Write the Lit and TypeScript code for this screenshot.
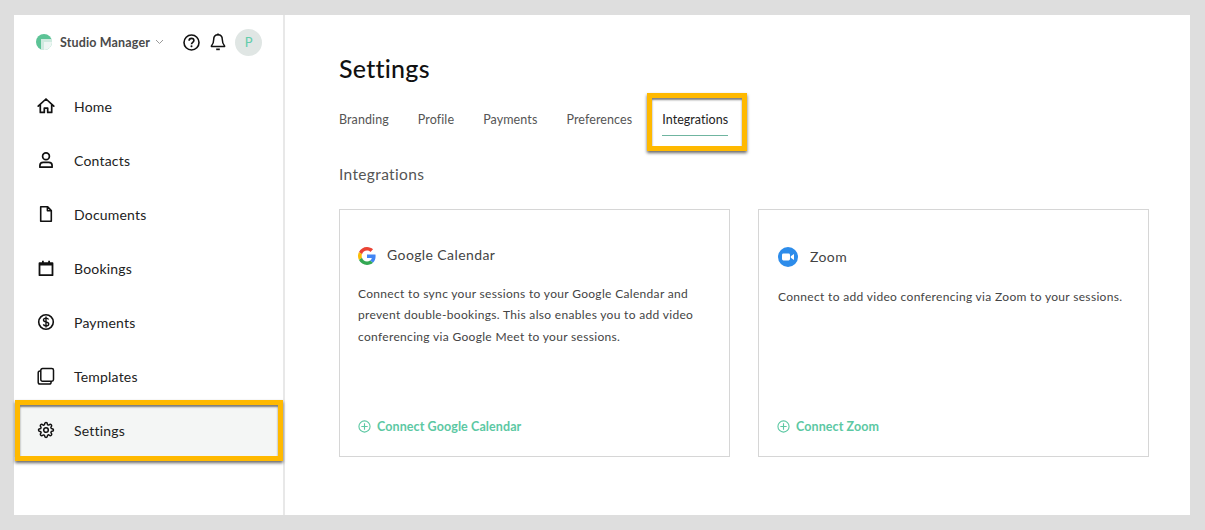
import { LitElement, html, css, svg } from "lit";
import { customElement } from "lit/decorators.js";

const icons: Record<string, unknown> = {
  home: svg`<path d="M2.2 10.2 10 3l7.8 7.2M4.3 8.6V16.4h4v-4.2h3.4v4.2h4V8.6" fill="none" stroke="#111" stroke-width="1.7" stroke-linejoin="round" stroke-linecap="round"/>`,
  person: svg`<circle cx="10" cy="6.3" r="3.4" fill="none" stroke="#111" stroke-width="1.7"/><path d="M3.9 17.2v-1.7c0-2 1.5-3.2 3.4-3.2h5.4c1.900 0 3.400 1.200 3.400 3.200v1.700z" fill="none" stroke="#111" stroke-width="1.700" stroke-linejoin="round"/>`,
  doc: svg`<path d="M4.700 2.800h7l3.600 3.800v10.600H4.700zM11.400 2.800v4h3.900" fill="none" stroke="#111" stroke-width="1.600" stroke-linejoin="round"/>`,
  cal: svg`<path d="M3.500 5.200h13v12h-13z" fill="none" stroke="#111" stroke-width="1.800" stroke-linejoin="round"/><path d="M3.500 5.200h13v2.200h-13zM6 2.800h1.800v3H6zM12.200 2.800H14v3h-1.800z" fill="#111"/>`,
  pay: svg`<circle cx="10" cy="10" r="7.300" fill="none" stroke="#111" stroke-width="1.600"/><path d="M12.600 7.500c-.5-1-1.500-1.400-2.600-1.400-1.400 0-2.500.7-2.500 1.900 0 2.800 5.200 1.200 5.200 4 0 1.200-1.200 1.900-2.700 1.900-1.200 0-2.200-.5-2.700-1.500M10 4.600v10.800" fill="none" stroke="#111" stroke-width="1.400"/>`,
  copy: svg`<path d="M6.500 2.600h9.300a1.700 1.700 0 0 1 1.700 1.700v9.300a1.700 1.700 0 0 1-1.700 1.700H6.500a1.700 1.700 0 0 1-1.700-1.700V4.300a1.700 1.700 0 0 1 1.700-1.700z" fill="none" stroke="#111" stroke-width="1.500"/><path d="M4.800 5H4a1.800 1.800 0 0 0-1.800 1.800v9.400A1.800 1.800 0 0 0 4 18h9.300a1.800 1.800 0 0 0 1.800-1.800v-.9" fill="none" stroke="#111" stroke-width="1.500"/>`,
  gear: svg`<g transform="translate(1.840 1.840) scale(.68)" fill="none" stroke="#111" stroke-width="2.200" stroke-linejoin="round"><circle cx="12" cy="12" r="3.400"/><path d="M19.400 15a1.650 1.650 0 0 0 .33 1.820l.06.06a2 2 0 0 1 0 2.830 2 2 0 0 1-2.830 0l-.06-.06a1.650 1.650 0 0 0-1.820-.33 1.650 1.650 0 0 0-1 1.510V21a2 2 0 0 1-2 2 2 2 0 0 1-2-2v-.09A1.650 1.650 0 0 0 9 19.400a1.650 1.650 0 0 0-1.820.33l-.06.06a2 2 0 0 1-2.830 0 2 2 0 0 1 0-2.830l.06-.06a1.650 1.650 0 0 0 .33-1.820 1.650 1.650 0 0 0-1.510-1H3a2 2 0 0 1-2-2 2 2 0 0 1 2-2h.09A1.650 1.650 0 0 0 4.600 9a1.650 1.650 0 0 0-.33-1.820l-.06-.06a2 2 0 0 1 0-2.830 2 2 0 0 1 2.830 0l.06.06a1.650 1.650 0 0 0 1.820.33H9a1.650 1.650 0 0 0 1-1.510V3a2 2 0 0 1 2-2 2 2 0 0 1 2 2v.09a1.650 1.650 0 0 0 1 1.510 1.650 1.650 0 0 0 1.820-.33l.06-.06a2 2 0 0 1 2.830 0 2 2 0 0 1 0 2.830l-.06.06a1.650 1.650 0 0 0-.33 1.820V9a1.650 1.650 0 0 0 1.510 1H21a2 2 0 0 1 2 2 2 2 0 0 1-2 2h-.09a1.650 1.650 0 0 0-1.510 1z"/></g>`,
};

const nav = [
  ["home", "Home"],
  ["person", "Contacts"],
  ["doc", "Documents"],
  ["cal", "Bookings"],
  ["pay", "Payments"],
  ["copy", "Templates"],
  ["gear", "Settings"],
];

const plus = html`<svg class="plus" viewBox="0 0 14 14" width="13" height="13"><circle cx="7" cy="7" r="6" fill="none" stroke="#5cc8a3" stroke-width="1.200"/><path d="M7 3.600v6.800M3.600 7h6.800" stroke="#5cc8a3" stroke-width="1.200"/></svg>`;

@customElement("app-root")
export class AppRoot extends LitElement {
  static styles = css`
    :host {
      display: block;
      width: 1205px;
      height: 530px;
      box-sizing: border-box;
      padding: 15px 15px 15px 14px;
      background: #dedede;
      font-family: Lato, "Open Sans", sans-serif;
      color: #222;
      overflow: hidden;
    }
    .window {
      display: flex;
      height: 500px;
      background: #fff;
    }
    .side {
      width: 269px;
      flex: none;
      border-right: 2px solid #e8e8e8;
    }
    .top {
      display: flex;
      align-items: center;
      height: 54px;
      padding: 0 0 0 22px;
    }
    .logo { margin-right: 8px; flex: none; }
    .brand { font-size: 12.5px; font-weight: 700; color: #4a4a4a; letter-spacing: 0.15px; }
    .chev { margin-left: 5px; flex: none; }
    .help { margin-left: 19px; flex: none; }
    .bell { margin-left: 10px; flex: none; }
    .avatar {
      margin-left: 9px;
      width: 27px;
      height: 27px;
      border-radius: 50%;
      background: #e0e6e4;
      color: #62cdaa;
      font-size: 13px;
      display: flex;
      align-items: center;
      justify-content: center;
    }
    .nav { padding-top: 10px; }
    .row {
      position: relative;
      height: 54px;
      display: flex;
      align-items: center;
      padding-left: 22px;
      font-size: 14px;
      letter-spacing: 0.2px;
      color: #222;
    }
    .row svg { flex: none; margin-right: 18px; }
    .row.active { background: #f4f6f5; }
    .mark {
      position: absolute;
      box-sizing: border-box;
      border: 5px solid #ffb900;
      box-shadow: 0 2px 3px rgba(0, 0, 0, 0.6), inset 0 2px 2px rgba(0, 0, 0, 0.5);
      pointer-events: none;
    }
    .row .mark { left: 1px; right: 0; top: -3px; bottom: -4px; }
    .main {
      flex: 1;
      padding: 0 41px 0 54px;
      min-width: 0;
    }
    h1 {
      margin: 38px 0 0;
      height: 30px;
      line-height: 30px;
      font-size: 25px;
      font-weight: 500;
      color: #111;
      letter-spacing: 0.25px;
    }
    .tabs {
      display: flex;
      margin-top: 23px;
      font-size: 12.5px;
      letter-spacing: 0.1px;
      color: #555;
    }
    .tab { position: relative; height: 28px; line-height: 28px; margin-right: 29px; }
    .tab.on {
      color: #222;
      border-bottom: 1px solid #6fb5a0;
      height: 29px;
      margin-right: 0;
      margin-left: 1px;
      letter-spacing: 0.05px;
    }
    .tab .mark { left: -15px; right: -19px; top: -13px; bottom: -16px; }
    h2 {
      margin: 26px 0 0;
      height: 24px;
      line-height: 24px;
      font-size: 15.5px;
      font-weight: 400;
      color: #555;
      letter-spacing: 0.35px;
    }
    .cards {
      display: grid;
      grid-template-columns: 391px 391px;
      gap: 28px;
      margin-top: 23px;
    }
    .card {
      box-sizing: border-box;
      height: 248px;
      border: 1px solid #d6d6d6;
      padding: 37px 18px 22px;
      display: flex;
      flex-direction: column;
    }
    .card.z { padding-left: 19px; }
    .head {
      display: flex;
      align-items: center;
      font-size: 14px;
      letter-spacing: 0.4px;
      color: #444;
      height: 18px;
    }
    .z .head { height: 20px; }
    .head svg { margin-right: 11px; flex: none; }
    .z .head svg { margin-right: 12px; }
    .head span { margin-bottom: 3px; }
    .z .head span { margin-bottom: 1px; }
    p {
      margin: 17.6px 0 0;
      font-size: 12px;
      line-height: 21.5px;
      letter-spacing: 0.32px;
      color: #444;
    }
    .z p { margin-top: 19px; }
    .link {
      margin-top: auto;
      display: flex;
      align-items: center;
      font-size: 12.5px;
      font-weight: 700;
      letter-spacing: 0.1px;
      color: #5cc8a3;
    }
    .z .link { margin-left: -1px; }
    .plus { margin-right: 6px; flex: none; }
  `;

  render() {
    return html`<div class="window">
      <aside class="side">
        <div class="top">
          <svg class="logo" width="16" height="16" viewBox="0 0 16 16">
            <circle cx="8" cy="8" r="8" fill="#5cc396"/>
            <path d="M5 5h11v3a8 8 0 0 1-8 8H5z" fill="#cfeadf"/>
            <path d="M8 8h8a8 8 0 0 1-8 8z" fill="#eef6f3"/>
          </svg>
          <span class="brand">Studio Manager</span>
          <svg class="chev" width="9" height="6" viewBox="0 0 9 6"><path d="M1 1l3.500 3.500L8 1" fill="none" stroke="#999" stroke-width="1"/></svg>
          <svg class="help" width="17" height="17" viewBox="0 0 17 17">
            <circle cx="8.500" cy="8.500" r="7.500" fill="none" stroke="#111" stroke-width="1.600"/>
            <path d="M6.100 6.700c0-1.500 1.100-2.300 2.400-2.300s2.400.8 2.400 2.100c0 1.800-2.400 1.800-2.400 3.700" fill="none" stroke="#111" stroke-width="1.600"/>
            <circle cx="8.500" cy="12.300" r="1" fill="#111"/>
          </svg>
          <svg class="bell" width="16" height="18" viewBox="0 0 16 18">
            <path d="M8 1.800c-2.800 0-4.300 2.200-4.300 4.800 0 3.600-1.100 5.200-2.300 6.400v.6h13.200V13c-1.200-1.200-2.300-2.800-2.300-6.400 0-2.600-1.500-4.800-4.300-4.800z" fill="none" stroke="#111" stroke-width="1.500" stroke-linejoin="round"/>
            <path d="M6.200 15.500h3.600v1.700H6.200z" fill="#111"/><path d="M7.200.6h1.600v1.600H7.200z" fill="#111"/>
          </svg>
          <div class="avatar">P</div>
        </div>
        <nav class="nav">
          ${nav.map(
            ([k, label]) => html`<div class="row ${k === "gear" ? "active" : ""}">
              <svg width="20" height="20" viewBox="0 0 20 20">${icons[k]}</svg>
              <span>${label}</span>
              ${k === "gear" ? html`<div class="mark"></div>` : ""}
            </div>`
          )}
        </nav>
      </aside>
      <main class="main">
        <h1>Settings</h1>
        <div class="tabs">
          <div class="tab">Branding</div>
          <div class="tab">Profile</div>
          <div class="tab">Payments</div>
          <div class="tab">Preferences</div>
          <div class="tab on">Integrations<div class="mark"></div></div>
        </div>
        <h2>Integrations</h2>
        <div class="cards">
          <section class="card">
            <div class="head">
              <svg width="18" height="18" viewBox="0 0 48 48">
                <path fill="#EA4335" d="M24 9.500c3.500 0 6.700 1.200 9.200 3.600l6.900-6.900C35.900 2.400 30.500 0 24 0 14.600 0 6.500 5.400 2.600 13.200l8 6.200C12.400 13.700 17.700 9.500 24 9.500z"/>
                <path fill="#4285F4" d="M46.900 24.500c0-1.600-.1-3.100-.4-4.500H24v9h12.900c-.6 3-2.200 5.500-4.800 7.200l7.700 6c4.500-4.200 7.100-10.300 7.100-17.700z"/>
                <path fill="#FBBC05" d="M10.500 28.600c-.5-1.400-.8-3-.8-4.600s.3-3.200.8-4.600l-8-6.200C.9 16.500 0 20.100 0 24s.9 7.500 2.600 10.800l7.900-6.200z"/>
                <path fill="#34A853" d="M24 48c6.500 0 11.900-2.100 15.900-5.800l-7.700-6c-2.200 1.400-4.900 2.300-8.100 2.300-6.300 0-11.600-4.200-13.500-9.900l-8 6.200C6.500 42.600 14.600 48 24 48z"/>
              </svg>
              <span>Google Calendar</span>
            </div>
            <p>Connect to sync your sessions to your Google Calendar and<br />prevent double-bookings. This also enables you to add video<br />conferencing via Google Meet to your sessions.</p>
            <div class="link">${plus}Connect Google Calendar</div>
          </section>
          <section class="card z">
            <div class="head">
              <svg width="20" height="20" viewBox="0 0 20 20">
                <circle cx="10" cy="10" r="10" fill="#2d8cea"/>
                <rect x="4" y="6.500" width="8" height="7" rx="1.400" fill="#fff"/>
                <path d="M12.800 9.200l3.200-2.300v6.200l-3.200-2.300z" fill="#fff"/>
              </svg>
              <span>Zoom</span>
            </div>
            <p>Connect to add video conferencing via Zoom to your sessions.</p>
            <div class="link">${plus}Connect Zoom</div>
          </section>
        </div>
      </main>
    </div>`;
  }
}
